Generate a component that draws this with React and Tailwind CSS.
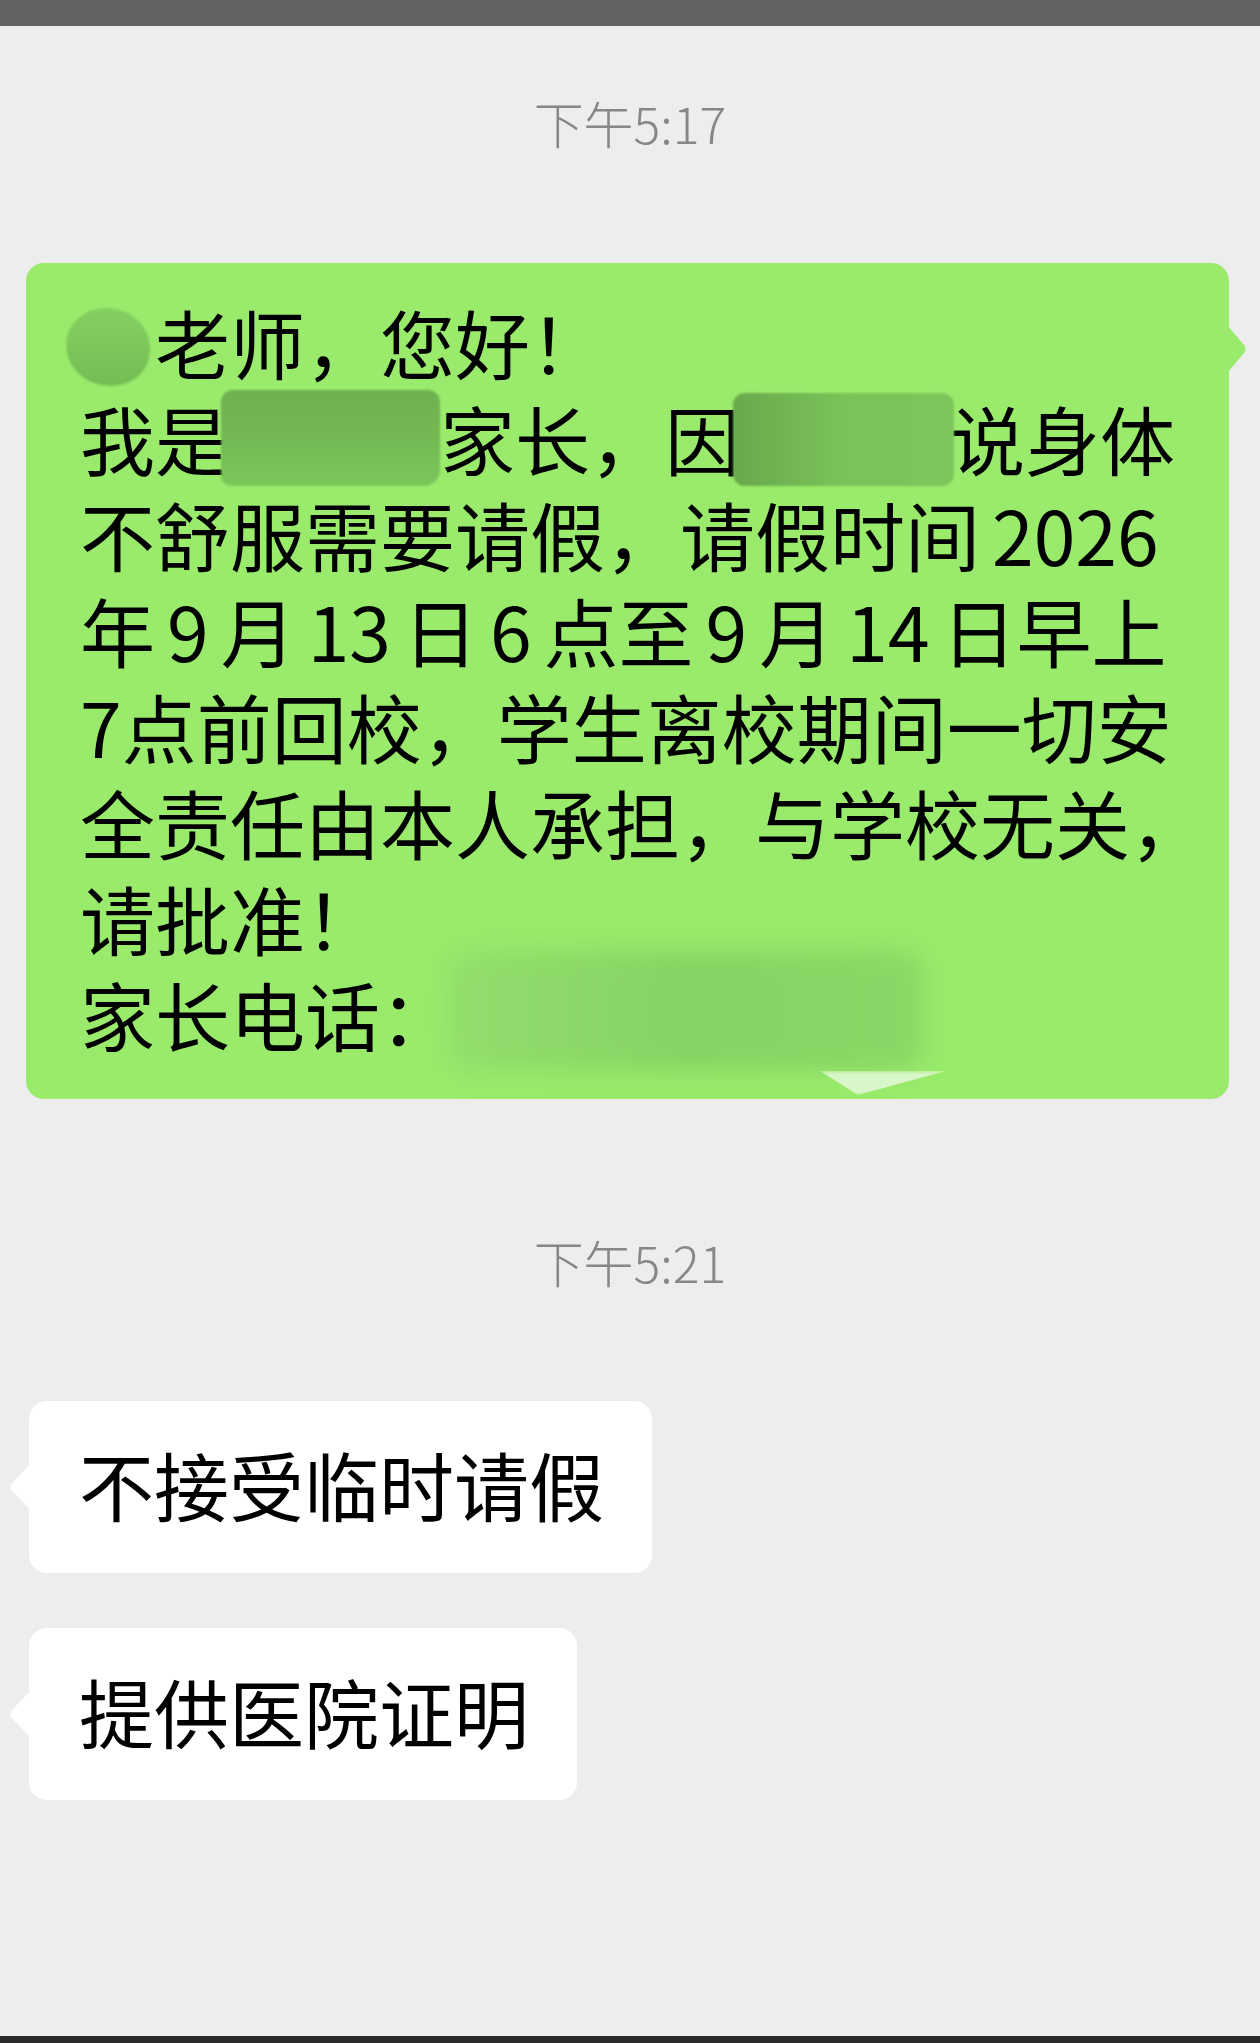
import React from 'react';

const FONT = "font-['Noto_Sans_CJK_SC','Noto_Sans',sans-serif]";

// Numbers get the small auto-gap the phone puts between CJK and digits
const N = ({ children }) => <span className="mx-3">{children}</span>;

const TailRight = ({ color }) => (
  <svg className="absolute left-full -ml-px top-[63px]" width="20" height="46" viewBox="0 0 20 46">
    <path d="M0 0 L16 19 Q19 23 16 27 L0 46 Z" fill={color} />
  </svg>
);

const TailLeft = ({ color }) => (
  <svg className="absolute right-full -mr-px top-[63px]" width="22" height="46" viewBox="0 0 22 46">
    <path d="M22 0 L4 19 Q1 23 4 27 L22 46 Z" fill={color} />
  </svg>
);

const Stamp = ({ children, className }) => (
  <div className={`text-center text-[50px] leading-[60px] font-light text-[#878787] ${className}`}>
    {children}
  </div>
);

const Reply = ({ text, className }) => (
  <div className={`pl-[29px] ${className}`}>
    <div className="relative w-fit bg-white rounded-[18px] pl-[50px] pr-[48px] pt-[35px] pb-[41px] text-[75px] leading-[96px] text-black whitespace-nowrap">
      <TailLeft color="#ffffff" />
      {text}
    </div>
  </div>
);

export default function App() {
  return (
    <div className={`w-[1260px] h-[2043px] bg-[#ededed] flex flex-col ${FONT}`}>
      <div className="h-[26px] bg-[#626262]" />

      <Stamp className="mt-[66px]">下午5:17</Stamp>

      {/* outgoing leave request */}
      <div className="mt-[111px] pl-[26px] pr-[31px]">
        <div className="relative bg-[#9aeb6b] rounded-[18px] pl-[54px] pr-[30px] pt-[31px] pb-[37px] text-[75px] leading-[96px] text-black">
          <TailRight color="#9aeb6b" />
          <div className="whitespace-nowrap">
            <span className="inline-block align-top mt-[14px] w-[84px] h-[78px] -ml-[14px] mr-[5px] rounded-[48%_52%_46%_54%] bg-linear-to-b from-[#86cf62] to-[#74bd53] blur-[1px]" />
            老师，您好！
          </div>
          <div className="whitespace-nowrap">
            我是
            <span className="inline-block align-top w-[219px] h-[96px] -ml-[9px] rounded-[12px_12px_16px_10px] bg-linear-to-b from-[#6eb04f] via-[#74b954] to-[#7cc65a] blur-[1px]" />
            家长，因
            <span className="inline-block align-top mt-[3px] w-[221px] h-[93px] -ml-[7px] -mr-[4px] rounded-[12px] bg-linear-to-r from-[#68a94b] via-[#7bc259] to-[#7ec55b] blur-[1px]" />
            说身体
          </div>
          <div className="whitespace-nowrap">
            不舒服需要请假，请假时间<span className="ml-3">2026</span>
          </div>
          <div className="whitespace-nowrap">
            年<N>9</N>月<N>13</N>日<N>6</N>点至<N>9</N>月<N>14</N>日早上
          </div>
          <div className="whitespace-nowrap">7点前回校，学生离校期间一切安</div>
          <div className="whitespace-nowrap">全责任由本人承担，与学校无关，</div>
          <div className="whitespace-nowrap">请批准！</div>
          <div className="whitespace-nowrap">
            家长电话：
            <span className="relative inline-block align-top -mt-[15px] -mb-[20px] w-[478px] h-[131px] -ml-[9px]">
              <span className="block h-[120px] rounded-[24px] bg-linear-to-r from-[#93de6d] via-[#86d264] to-[#8ad766] blur-md" />
              <span className="absolute left-[374px] top-[120px] w-[126px] h-[24px] bg-[#d9f6c8] blur-[2px] [clip-path:polygon(0_0,100%_0,30%_100%)]" />
            </span>
          </div>
        </div>
      </div>

      <Stamp className="mt-[132px]">下午5:21</Stamp>

      <Reply className="mt-[110px]" text="不接受临时请假" />
      <Reply className="mt-[55px]" text="提供医院证明" />

      <div className="flex-1" />
      <div className="h-[7px] bg-[#2b2b2b]" />
    </div>
  );
}
